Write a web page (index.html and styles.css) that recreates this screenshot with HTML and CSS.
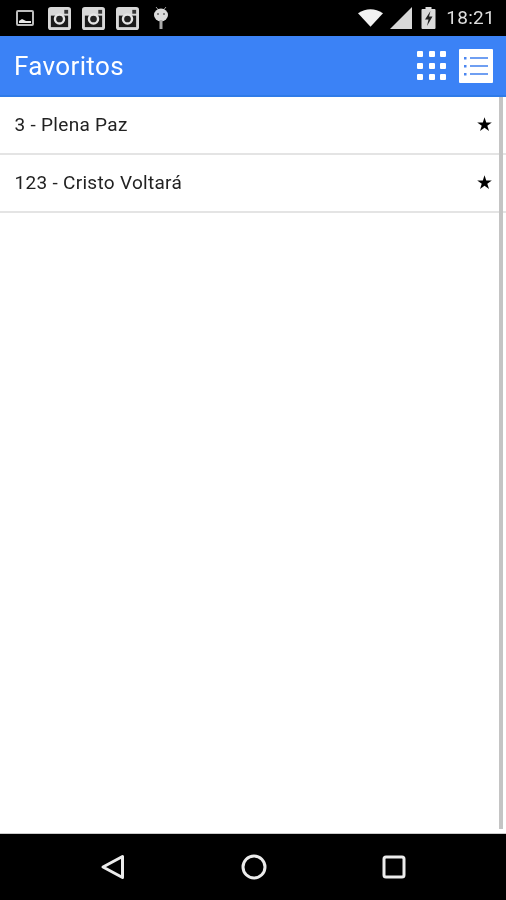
FILE: index.html
```html
<!DOCTYPE html>
<html lang="pt">
<head>
<meta charset="utf-8">
<title>Favoritos</title>
<link rel="stylesheet" href="styles.css">
</head>
<body>
<div class="phone">
  <div class="status">
    <div class="status-left">
      <svg class="ic-pic" viewBox="0 0 18 16"><rect x="1" y="1" width="16" height="14" rx="1" fill="none" stroke="#bdbdbd" stroke-width="2"/><path d="M3 13v-2l3-2 2 1 2 1 5 0v2z" fill="#e8e8e8"/></svg>
      <svg class="ic-insta" viewBox="0 0 24 24"><rect width="24" height="24" rx="3" fill="#d8d8d8"/><rect x="3" y="9" width="18" height="12" fill="#1a1a1a"/><circle cx="12" cy="12.5" r="6" fill="#e6e6e6"/><circle cx="12" cy="12.5" r="3.500" fill="#222"/><rect x="17" y="3" width="4" height="4" fill="#333"/></svg>
      <svg class="ic-insta" viewBox="0 0 24 24"><rect width="24" height="24" rx="3" fill="#d8d8d8"/><rect x="3" y="9" width="18" height="12" fill="#1a1a1a"/><circle cx="12" cy="12.5" r="6" fill="#e6e6e6"/><circle cx="12" cy="12.5" r="3.500" fill="#222"/><rect x="17" y="3" width="4" height="4" fill="#333"/></svg>
      <svg class="ic-insta" viewBox="0 0 24 24"><rect width="24" height="24" rx="3" fill="#d8d8d8"/><rect x="3" y="9" width="18" height="12" fill="#1a1a1a"/><circle cx="12" cy="12.5" r="6" fill="#e6e6e6"/><circle cx="12" cy="12.5" r="3.500" fill="#222"/><rect x="17" y="3" width="4" height="4" fill="#333"/></svg>
      <svg class="ic-droid" viewBox="0 0 16 24"><path d="M3 1l2.500 3M13 1l-2.500 3" stroke="#999" stroke-width="1"/><ellipse cx="8" cy="9" rx="7" ry="6.500" fill="#dcdcdc"/><circle cx="5" cy="8" r="1" fill="#666"/><circle cx="11" cy="8" r="1" fill="#666"/><rect x="6.500" y="14" width="3" height="9" fill="#aaa"/></svg>
    </div>
    <div class="status-right">
      <svg class="ic-wifi" viewBox="0 0 26 18"><path d="M0 4Q13-4 26 4L13 18z" fill="#f2f2f2"/></svg>
      <svg class="ic-signal" viewBox="0 0 22 22"><path d="M0 22L22 0v22z" fill="#d8d8d8"/></svg>
      <svg class="ic-batt" viewBox="0 0 14 22"><path d="M4 0h6v2h3a1 1 0 0 1 1 1v18a1 1 0 0 1-1 1H1a1 1 0 0 1-1-1V3a1 1 0 0 1 1-1h3z" fill="#dcdcdc"/><path d="M9 4L3.500 12.500H7L5.500 19 11 9.500H7.500z" fill="#222"/></svg>
      <span class="clock">18:21</span>
    </div>
  </div>
  <header class="appbar">
    <h1 class="title">Favoritos</h1>
    <div class="actions">
      <div class="grid-btn">
        <i></i><i></i><i></i><i></i><i></i><i></i><i></i><i></i><i></i>
      </div>
      <svg class="list-btn" viewBox="0 0 34 34"><rect width="34" height="34" rx="1" fill="#fff"/><g fill="#4a86f0"><rect x="5" y="8" width="2.500" height="2.500"/><rect x="5" y="16" width="2.500" height="2.500"/><rect x="5" y="24" width="2.500" height="2.500"/></g><g fill="#6f9ff2"><rect x="11" y="8" width="18" height="2"/><rect x="11" y="16" width="18" height="2"/><rect x="11" y="24" width="18" height="2"/></g></svg>
    </div>
  </header>
  <main class="content">
    <ul class="list">
      <li class="row"><span>3 - Plena Paz</span><span class="star">★</span></li>
      <li class="row"><span>123 - Cristo Voltará</span><span class="star">★</span></li>
    </ul>
    <div class="scrollbar"></div>
  </main>
  <nav class="navbar">
    <svg class="nav-ic" viewBox="0 0 26 26"><path d="M22.500 2.500v21L3 13z" fill="none" stroke="#ececec" stroke-width="3" stroke-linejoin="round"/></svg>
    <svg class="nav-ic" viewBox="0 0 26 26"><circle cx="13" cy="13" r="11" fill="none" stroke="#ececec" stroke-width="3"/></svg>
    <svg class="nav-ic" viewBox="0 0 26 26"><rect x="3" y="3" width="20" height="20" rx="2" fill="none" stroke="#ececec" stroke-width="3"/></svg>
  </nav>
</div>
</body>
</html>
```
FILE: styles.css
```css
* { box-sizing: border-box; }
html, body { margin: 0; padding: 0; }
body { font-family: Roboto, "Liberation Sans", sans-serif; background: #fff; }
.phone { width: 506px; height: 900px; display: flex; flex-direction: column; overflow: hidden; filter: blur(0.5px); }

.status { height: 36px; background: #000; display: flex; justify-content: space-between; align-items: center; padding: 0 11px 0 16px; }
.status-left { display: flex; align-items: center; }
.ic-pic { width: 18px; height: 16px; margin-right: 14px; }
.ic-insta { width: 23px; height: 23px; margin-right: 11px; }
.ic-droid { width: 16px; height: 24px; margin-left: 3px; }
.status-right { display: flex; align-items: center; }
.ic-wifi { width: 25px; height: 18px; margin-right: 7px; }
.ic-signal { width: 22px; height: 22px; margin-right: 9px; }
.ic-batt { width: 15px; height: 22px; margin-right: 10px; }
.clock { color: #dedede; font-size: 19px; letter-spacing: 0.3px; line-height: 22px; }

.appbar { height: 61px; background: #3b82f6; border-bottom: 2px solid #2f7be8; display: flex; justify-content: space-between; align-items: center; padding: 0 13px 0 14px; }
.title { margin: 0; color: #fff; font-weight: 400; font-size: 26px; letter-spacing: 0.35px; line-height: 30px; }
.actions { display: flex; align-items: center; gap: 13px; }
.grid-btn { width: 29px; height: 29px; display: grid; grid-template-columns: repeat(3, 6px); grid-auto-rows: 6px; justify-content: space-between; align-content: space-between; }
.grid-btn i { background: #fff; border-radius: 1px; }
.list-btn { width: 34px; height: 34px; display: block; }

.content { flex: 1; position: relative; background: #fff; border-bottom: 1px solid #ccc; }
.list { list-style: none; margin: 0; padding: 0; }
.row { height: 58px; border-bottom: 2px solid #e4e4e4; display: flex; justify-content: space-between; align-items: center; padding: 0 13px 2px 14.5px; font-size: 19px; letter-spacing: 0.3px; color: #222; }
.star { color: #000; font-family: "DejaVu Sans", sans-serif; font-size: 19px; line-height: 1; letter-spacing: 0; }
.scrollbar { position: absolute; right: 3px; top: 0; bottom: 4px; width: 4px; background: #c4c4c4; }

.navbar { height: 66px; background: #000; display: flex; align-items: center; padding: 0 99px 0 100px; justify-content: space-between; }
.nav-ic { width: 26px; height: 26px; }
```
